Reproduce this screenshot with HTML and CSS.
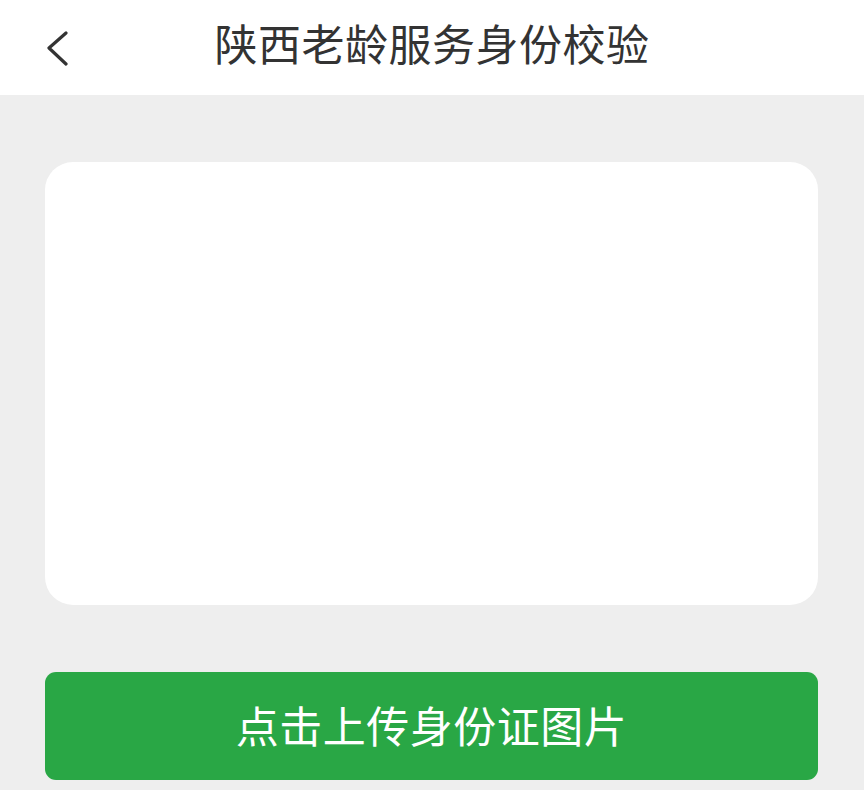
FILE: index.html
```html
<!DOCTYPE html>
<html lang="zh">
<head>
<meta charset="utf-8">
<title>陕西老龄服务身份校验</title>
<link rel="stylesheet" href="styles.css">
</head>
<body>
<header class="topbar">
  <div class="back">
    <svg width="24" height="40" viewBox="0 0 24 40" aria-hidden="true">
      <polyline points="19,4 2,19 19,35" fill="none" stroke="#333" stroke-width="3.2" stroke-linecap="round" stroke-linejoin="round"/>
    </svg>
  </div>
  <h1 class="title">陕西老龄服务身份校验</h1>
  <div></div>
</header>
<main class="content">
  <div class="card"></div>
  <button class="upload">点击上传身份证图片</button>
</main>
</body>
</html>
```
FILE: styles.css
```css
html, body {
  margin: 0;
  padding: 0;
}
body {
  background: #eeeeee;
  font-family: "Noto Sans CJK SC", "Noto Sans", sans-serif;
  width: 864px;
  height: 790px;
  overflow: hidden;
}
.topbar {
  height: 95px;
  background: #ffffff;
  display: grid;
  grid-template-columns: 1fr auto 1fr;
  align-items: center;
}
.back {
  padding-left: 47px;
  display: flex;
  align-items: center;
  padding-top: 2px;
}
.back svg {
  display: block;
}
.title {
  margin: 0;
  font-size: 43px;
  font-weight: 400;
  color: #333333;
  line-height: 1;
  letter-spacing: 0.5px;
  padding-bottom: 10px;
}
.content {
  padding: 67px 46px 0 45px;
  display: flex;
  flex-direction: column;
  gap: 67px;
}
.card {
  height: 443px;
  background: #ffffff;
  border-radius: 28px;
}
.upload {
  height: 108px;
  border: none;
  border-radius: 11px;
  background: #29a745;
  color: #ffffff;
  font-family: "Noto Sans CJK SC", "Noto Sans", sans-serif;
  font-size: 43px;
  font-weight: 400;
  letter-spacing: 0.5px;
  padding: 0 0 4px 0;
  margin: 0;
  width: 100%;
}
```
